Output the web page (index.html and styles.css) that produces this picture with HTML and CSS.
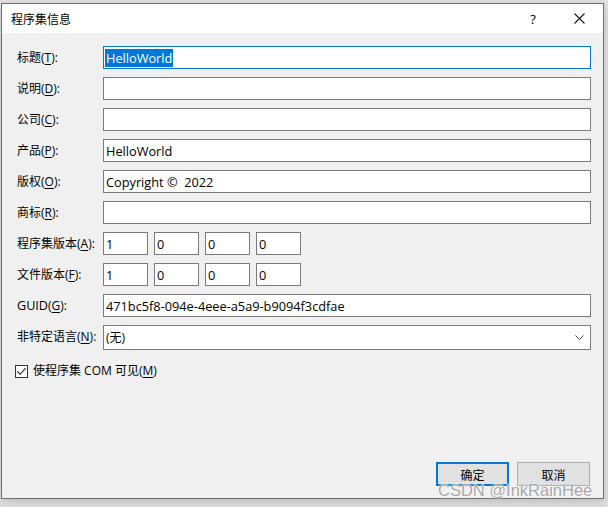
FILE: index.html
```html
<!DOCTYPE html>
<html lang="zh-CN">
<head>
<meta charset="utf-8">
<title>程序集信息</title>
<link rel="stylesheet" href="styles.css">
</head>
<body>
<div class="window">
  <div class="titlebar">
    <span class="title">程序集信息</span>
    <span class="help">?</span>
    <span class="close"><svg width="11" height="11" viewBox="0 0 11 11"><path d="M0.5 0.5 L10.5 10.5 M10.5 0.5 L0.5 10.5" stroke="#1a1a1a" stroke-width="1.1" fill="none"/></svg></span>
  </div>
  <div class="content">
    <div class="form">
      <div class="label">标题(<u>T</u>):</div>
      <div class="field focus"><span class="sel">HelloWorld</span></div>

      <div class="label">说明(<u>D</u>):</div>
      <div class="field"></div>

      <div class="label">公司(<u>C</u>):</div>
      <div class="field"></div>

      <div class="label">产品(<u>P</u>):</div>
      <div class="field">HelloWorld</div>

      <div class="label">版权(<u>O</u>):</div>
      <div class="field">Copyright ©  2022</div>

      <div class="label">商标(<u>R</u>):</div>
      <div class="field"></div>

      <div class="label">程序集版本(<u>A</u>):</div>
      <div class="versions">
        <div class="field small">1</div>
        <div class="field small">0</div>
        <div class="field small">0</div>
        <div class="field small">0</div>
      </div>

      <div class="label">文件版本(<u>F</u>):</div>
      <div class="versions">
        <div class="field small">1</div>
        <div class="field small">0</div>
        <div class="field small">0</div>
        <div class="field small">0</div>
      </div>

      <div class="label"><span class="latin">GUID</span>(<u>G</u>):</div>
      <div class="field">471bc5f8-094e-4eee-a5a9-b9094f3cdfae</div>

      <div class="label">非特定语言(<u>N</u>):</div>
      <div class="field combo"><span>(无)</span>
        <svg class="chev" width="9" height="5" viewBox="0 0 9 5"><path d="M0.5 0.5 L4.5 4.5 L8.5 0.5" stroke="#444" stroke-width="1" fill="none"/></svg>
      </div>
    </div>

    <div class="check">
      <span class="box"><svg width="11" height="11" viewBox="0 0 11 11"><path d="M1.5 5.5 L4.2 8.3 L9.6 2.2" stroke="#222" stroke-width="1.1" fill="none"/></svg></span>
      <span>使程序集 COM 可见(<u>M</u>)</span>
    </div>

    <div class="buttons">
      <div class="btn default">确定</div>
      <div class="btn">取消</div>
    </div>
  </div>
</div>
<div class="watermark">CSDN @InkRainHee</div>
</body>
</html>
```
FILE: styles.css
```css
html, body {
  margin: 0;
  padding: 0;
}
body {
  width: 608px;
  height: 507px;
  background: #e2e2e2;
  font-family: "Open Sans", "Noto Sans CJK SC", sans-serif;
  font-size: 12px;
  color: #000;
  position: relative;
  overflow: hidden;
}
.window {
  margin: 3px 0 0 1px;
  width: 601px;
  height: 494px;
  border: 1px solid #6f6f6f;
  background: #f0f0f0;
  display: flex;
  flex-direction: column;
  box-shadow: 0 3px 10px rgba(0, 0, 0, 0.18);
}
.titlebar {
  height: 29px;
  background: #fff;
  display: flex;
  align-items: center;
  padding-left: 9px;
  font-family: "Noto Sans CJK SC", sans-serif;
}
.title {
  flex: 1;
  font-size: 12px;
  padding-bottom: 1px;
}
.help {
  font-family: "Open Sans", sans-serif;
  font-size: 13px;
  width: 46px;
  text-align: center;
}
.close {
  width: 46px;
  display: flex;
  justify-content: center;
  align-items: center;
  height: 29px;
  padding-right: 1px;
}
.content {
  flex: 1;
  display: flex;
  flex-direction: column;
  padding: 13px 12px 12px 15px;
}
.form {
  display: grid;
  grid-template-columns: 86px 1fr;
  grid-auto-rows: 23px;
  row-gap: 8px;
  align-items: center;
}
.label {
  white-space: nowrap;
  line-height: 16px;
}
.latin {
  font-size: 12.6px;
}
.label u, .check u {
  text-underline-offset: 2px;
}
.field {
  height: 23px;
  box-sizing: border-box;
  border: 1px solid #7a7a7a;
  background: #fff;
  padding: 0 2px;
  display: flex;
  align-items: center;
  white-space: pre;
  line-height: 16px;
  font-size: 12.75px;
}
.field.focus {
  border-color: #0078d7;
  padding-left: 1px;
}
.sel {
  background: #0078d7;
  color: #fff;
  padding: 1px;
}
.versions {
  display: flex;
  gap: 6px;
}
.field.small {
  width: 45px;
}
.field.combo {
  height: 25px;
  justify-content: space-between;
  padding-right: 6px;
  margin-top: 2px;
  font-size: 12px;
}
.chev {
  display: block;
}
.check {
  margin-top: 15px;
  margin-left: -2px;
  display: flex;
  align-items: center;
  gap: 5px;
  line-height: 16px;
}
.box {
  width: 11px;
  height: 11px;
  border: 1px solid #333;
  background: #fff;
  display: flex;
}
.buttons {
  margin-top: auto;
  display: flex;
  justify-content: flex-end;
  gap: 8px;
  padding-right: 1px;
}
.btn {
  width: 73px;
  height: 24px;
  box-sizing: border-box;
  background: #e1e1e1;
  border: 1px solid #adadad;
  display: flex;
  align-items: center;
  justify-content: center;
  font-family: "Noto Sans CJK SC", sans-serif;
}
.btn.default {
  border: 2px solid #0078d7;
}
.watermark {
  position: absolute;
  left: 438px;
  top: 481px;
  font-family: "Liberation Sans", sans-serif;
  font-size: 16.5px;
  color: rgba(150, 150, 150, 0.85);
  text-shadow: 0 0 2px #fff, 0 0 1px #fff;
  white-space: nowrap;
}
```
